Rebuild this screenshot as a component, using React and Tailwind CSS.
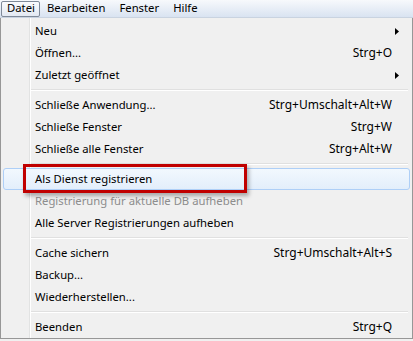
import React from 'react'

const items = [
  { label: 'Neu', sub: true },
  { label: 'Öffnen...', key: 'Strg+O' },
  { label: 'Zuletzt geöffnet', sub: true },
  { sep: true },
  { label: 'Schließe Anwendung...', key: 'Strg+Umschalt+Alt+W' },
  { label: 'Schließe Fenster', key: 'Strg+W' },
  { label: 'Schließe alle Fenster', key: 'Strg+Alt+W' },
  { sep: true },
  { label: 'Als Dienst registrieren', active: true },
  { label: 'Registrierung für aktuelle DB aufheben', disabled: true },
  { label: 'Alle Server Registrierungen aufheben' },
  { sep: true },
  { label: 'Cache sichern', key: 'Strg+Umschalt+Alt+S' },
  { label: 'Backup...' },
  { label: 'Wiederherstellen...' },
  { sep: true },
  { label: 'Beenden', key: 'Strg+Q' },
]

function Arrow() {
  return (
    <svg width="4" height="7" viewBox="0 0 4 7" className="block">
      <path d="M0 0 L4 3.5 L0 7 Z" fill="#000" />
    </svg>
  )
}

export default function App() {
  return (
    <div
      className="relative w-[413px] h-[341px] bg-[#f0f0f0] overflow-hidden text-[11.3px] text-black"
      style={{ fontFamily: '"Noto Sans", "Open Sans", sans-serif' }}
    >
      <div className="h-[18px] flex items-center bg-gradient-to-b from-[#f7f9fc] to-[#d9e3f1] border-b border-[#c9d3e0]">
        <div className="ml-[1px] w-[39px] h-[16px] pl-[5px] flex items-center rounded-[2px] border border-[#7f8a99] bg-gradient-to-b from-[#fafbfd] to-[#e3e9f2]">
          Datei
        </div>
        <span className="ml-[7px]">Bearbeiten</span>
        <span className="ml-[14px]">Fenster</span>
        <span className="ml-[14px]">Hilfe</span>
      </div>

      <div className="relative w-[413px] h-[321px] bg-[#f0f0f0] border border-[#979797] border-t-0 pt-[2px] px-[2px]">
        <div className="absolute left-[28px] top-0 bottom-0 w-[2px] border-l border-[#e2e3e3]">
          <div className="w-[1px] h-full bg-white" />
        </div>
        {items.map((it, i) =>
          it.sep ? (
            <div key={i} className="h-[8px] flex items-center pl-[28px] pr-[2px]">
              <div className="w-full">
                <div className="h-[1px] bg-[#e0e0e0]" />
                <div className="h-[1px] bg-white" />
              </div>
            </div>
          ) : (
            <div
              key={i}
              className={
                'relative h-[22px] flex items-center pl-[31px] pr-[17px] rounded-[3px] border ' +
                (it.active
                  ? 'border-[#aecff7] bg-gradient-to-b from-[#f2f8fe] to-[#e3eefb]'
                  : 'border-transparent')
              }
            >
              <span className={'flex-1 leading-none ' + (it.disabled ? 'text-[#8d8d8d]' : '')}>
                {it.label}
              </span>
              {it.key && <span className="leading-none text-[12px]">{it.key}</span>}
              {it.sub && (
                <span className="absolute right-[10px] top-[7px]">
                  <Arrow />
                </span>
              )}
            </div>
          )
        )}
      </div>

      <div className="absolute left-[23px] top-[164px] w-[224px] h-[29px] border-[3px] border-[#c00000] shadow-[2px_3px_4px_rgba(0,0,0,0.3)]" />
    </div>
  )
}
